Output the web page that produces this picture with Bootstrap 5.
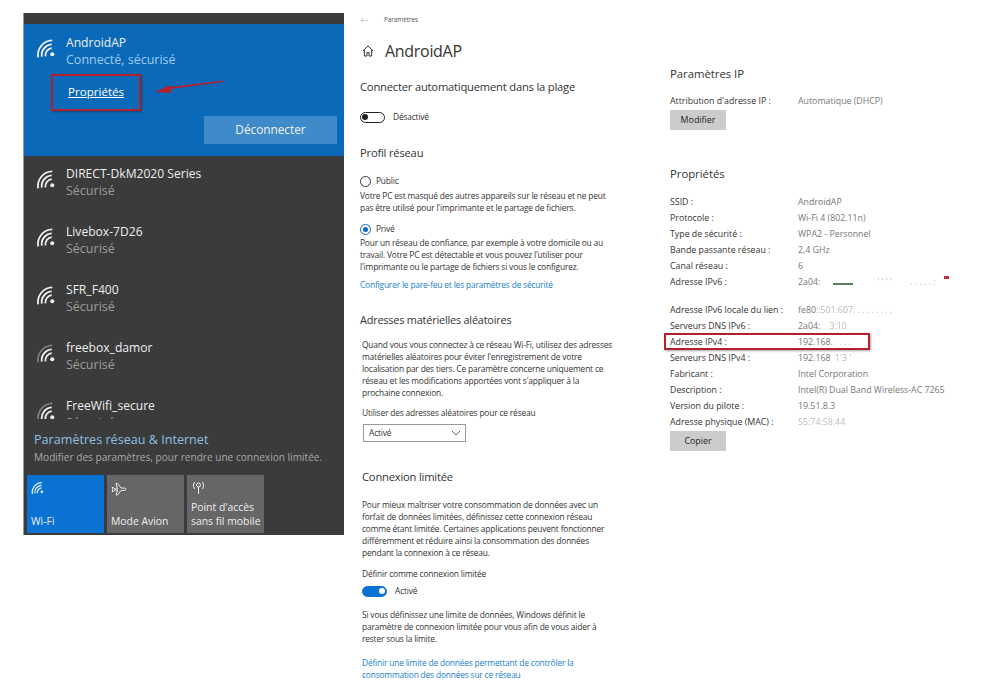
<!DOCTYPE html>
<html lang="fr"><head><meta charset="utf-8"><title>AndroidAP</title>
<link href="https://cdn.jsdelivr.net/npm/bootstrap@5.3.0/dist/css/bootstrap.min.css" rel="stylesheet">
<style>
html,body{height:693px;overflow:hidden;background:#fff}
body{font-family:"Open Sans","Noto Sans",sans-serif;color:#333;position:relative}
.stage{padding:13px 0 0 23px}
.flyout{width:321px;height:522px;background:#3b3b3b;color:#eee;padding-top:11px;flex:none;border-left:1px solid #999}
.activenet{height:132px;background:#0a69b8;padding:10px 0 0 12px;position:relative}
.netrow{height:58px;padding:9px 0 0 12px}
.netrow.clip{height:31px;overflow:hidden}
.netline{gap:9px}
.netline svg{flex:none;margin-top:4px}
.nname{font-size:12.1px;line-height:17px;white-space:nowrap}
.nsub{font-size:12.5px;line-height:17px;color:#9c9c9c}
.activenet .nsub{color:#9fcdf0}
.proplink{font-size:11.6px;color:#fff;text-decoration:underline;display:block;margin:15px 0 0 32px;line-height:17px}
.discobtn{position:absolute;right:7px;bottom:12px;width:133px;height:28px;background:#3f8ac8;color:#f2f2f2;font-size:11.8px;border:0;border-radius:0;padding:0}
.netfoot{padding:11px 0 0 10px}
.nettitle{font-size:12.6px;line-height:19px;color:#8cc0e6}
.netdesc{font-size:10.1px;line-height:17px;color:#a8a8a8;white-space:nowrap}
.tiles{gap:3px;margin:9px 0 0 3px}
.tile{width:77px;height:58px;background:#666;color:#eee;font-size:10.4px;line-height:14px;padding:6px 3px 5px 4px;white-space:nowrap}
.tile.on{background:#0a72d2}
.midcol{width:270px;margin-left:16px;flex:none;padding-top:1px;font-size:8.4px;letter-spacing:-.17px;line-height:12px;color:#333}
.crumb{font-size:6.3px;line-height:12px;color:#555;gap:16px;height:12px;letter-spacing:0}
.pagehead{font-size:16px;letter-spacing:-.3px;line-height:24px;color:#333;margin-top:13px;gap:11px;height:24px;padding-left:2px}
.h-sec{font-size:11.3px;line-height:16px;color:#333;font-weight:400;margin:0;white-space:nowrap}
.midcol .h-sec{font-size:11.2px;letter-spacing:-.2px}
.midcol .h-left{margin-left:-2px;font-size:10.9px}
.gap-a{margin-top:16px}.gap-b{margin-top:14px}.gap-c{margin-top:22px}.gap-d{margin-top:3px}.gap-e{margin-top:9px}.gap-f{margin-top:2px}.gap-g{margin-top:6px}.gap-h{margin-top:21px}.gap-i{margin-top:11px}.gap-j{margin-top:8px}.gap-k{margin-top:5px}.gap-l{margin-top:27px}.gap-m{margin-top:12px}.gap-n{margin-top:16px}.gap-o{margin-top:14px}
.lowerpart{padding-left:2px}
.ctl{height:12px}
.radrow{gap:5px}
.tline{white-space:nowrap}
.tog{width:25px;height:11px;border:1.5px solid #222;border-radius:6px;padding:1px;display:inline-flex;align-items:center}
.tog i{width:6px;height:6px;border-radius:50%;background:#222}
.tog.on{background:#0a72d2;border-color:#0a72d2;justify-content:flex-end}
.tog.on i{background:#fff}
.radioish{width:11px;height:11px;border:1px solid #333;border-radius:50%;display:inline-flex;align-items:center;justify-content:center}
.radioish.on{border-color:#0a69c8;border-width:1.5px}
.radioish.on i{width:5px;height:5px;border-radius:50%;background:#0a69c8}
.bluelink{color:#1a7fc9;text-decoration:none;white-space:nowrap}
.selbox{width:103px;height:18px;border:1.5px solid #999;padding:0 0 0 5px;margin-left:1px;color:#333}
.rightcol{width:300px;margin-left:40px;flex:none;padding-top:53px;font-size:8.8px;color:#333}
.rrow{height:16px;line-height:16px;white-space:nowrap}
.rrow.spacer{height:12px}
.rlab{width:128px;flex:none}
.rval{color:#777}
.graybtn{width:56px;height:20px;background:#ccc;color:#222;font-size:8.9px;border:0;border-radius:0;padding:0;line-height:20px;margin-top:1px}
.propshead{margin-top:36px}
.proplist{margin-top:12px}
.faint{color:#bbb;filter:blur(.5px)}
.redbox{position:absolute;border:2px solid #b3202c;box-shadow:1px 1px 2px rgba(0,0,0,.35)}
.rb1{left:51px;top:74px;width:90px;height:37px}
.rb2{left:664px;top:333px;width:206px;height:17px}
.arrowover{position:absolute;left:150px;top:76px}
.inkdash{position:absolute;height:2px;filter:blur(.6px)}
.ink1{left:833px;top:283px;width:20px;background:#5d7f5a}
.ink2{left:944px;top:276px;width:5px;height:3px;background:#c8303c}
</style></head>
<body>
<div class="stage d-flex align-items-start">
  <div class="flyout">
    <div class="activenet">
      <div class="d-flex netline">
        <svg width="21" height="21" viewBox="0 0 20 20" fill="none" stroke="#f2f2f2" stroke-width="1.7"><use href="#wf"/></svg>
        <div><div class="nname">AndroidAP</div><div class="nsub">Connecté, sécurisé</div></div>
      </div>
      <a class="proplink" href="#">Propriétés</a>
      <button class="btn discobtn">Déconnecter</button>
    </div>
    <div class="netrow"><div class="d-flex netline"><svg width="21" height="21" viewBox="0 0 20 20" fill="none" stroke="#f2f2f2" stroke-width="1.7"><use href="#wf"/></svg><div><div class="nname">DIRECT-DkM2020 Series</div><div class="nsub">Sécurisé</div></div></div></div>
    <div class="netrow"><div class="d-flex netline"><svg width="21" height="21" viewBox="0 0 20 20" fill="none" stroke="#f2f2f2" stroke-width="1.7"><use href="#wf"/></svg><div><div class="nname">Livebox-7D26</div><div class="nsub">Sécurisé</div></div></div></div>
    <div class="netrow"><div class="d-flex netline"><svg width="21" height="21" viewBox="0 0 20 20" fill="none" stroke="#f2f2f2" stroke-width="1.7"><use href="#wf"/></svg><div><div class="nname">SFR_F400</div><div class="nsub">Sécurisé</div></div></div></div>
    <div class="netrow"><div class="d-flex netline"><svg width="21" height="21" viewBox="0 0 20 20" fill="none" stroke="#f2f2f2" stroke-width="1.7"><use href="#wf2"/></svg><div><div class="nname">freebox_damor</div><div class="nsub">Sécurisé</div></div></div></div>
    <div class="netrow clip"><div class="d-flex netline"><svg width="21" height="21" viewBox="0 0 20 20" fill="none" stroke="#f2f2f2" stroke-width="1.7"><use href="#wf2"/></svg><div><div class="nname">FreeWifi_secure</div><div class="nsub">Sécurisé</div></div></div></div>
    <div class="netfoot">
      <div class="nettitle">Paramètres réseau &amp; Internet</div>
      <div class="netdesc">Modifier des paramètres, pour rendre une connexion limitée.</div>
    </div>
    <div class="d-flex tiles">
      <div class="tile on d-flex flex-column justify-content-between"><svg width="14" height="14" viewBox="0 0 20 20" fill="none" stroke="#e8f2fb" stroke-width="1.8"><use href="#wf"/></svg><div>Wi-Fi</div></div>
      <div class="tile d-flex flex-column justify-content-between"><svg width="16" height="16" viewBox="0 0 16 16" fill="none" stroke="#eee" stroke-width="1"><path d="M1 6.500h1.500L4 8h2.500L5 2.500h1.500L10 7h3.500a1.200 1.200 0 0 1 0 2.400H10L6.500 14H5l1.500-5H4l-1.500 1.500H1L2 8.200z"/></svg><div>Mode Avion</div></div>
      <div class="tile d-flex flex-column justify-content-between"><svg width="15" height="14" viewBox="0 0 15 14" fill="none" stroke="#eee" stroke-width="1"><path d="M7.500 6v7M7.500 2a2 2 0 0 1 2 2 2 2 0 0 1-2 2 2 2 0 0 1-2-2 2 2 0 0 1 2-2M3.500 1Q1 4 3.500 8M11.500 1q2.500 3 0 7"/></svg><div>Point d'accès<br>sans fil mobile</div></div>
    </div>
  </div>

  <div class="midcol">
    <div class="crumb d-flex align-items-center">
      <svg width="8" height="7" viewBox="0 0 8 7" fill="none" stroke="#c4c4c4" stroke-width=".8"><path d="M8 3.500H1M3.500 1 1 3.500 3.500 6"/></svg>
      <span>Paramètres</span>
    </div>
    <div class="pagehead d-flex align-items-center">
      <svg width="12" height="12" viewBox="0 0 12 12" fill="none" stroke="#333" stroke-width="1"><path d="M.8 6 6 1l5.200 5M2.300 5v6h2.700V7.500h2V11h2.700V5"/></svg>
      <span>AndroidAP</span>
    </div>
    <h2 class="h-sec gap-a">Connecter automatiquement dans la plage</h2>
    <div class="d-flex align-items-center gap-2 ctl gap-n"><span class="tog"><i></i></span><span>Désactivé</span></div>
    <h2 class="h-sec gap-c">Profil réseau</h2>
    <div class="d-flex align-items-center radrow ctl gap-b"><span class="radioish"></span><span>Public</span></div>
    <div class="tline gap-d">Votre PC est masqué des autres appareils sur le réseau et ne peut<br>pas être utilisé pour l'imprimante et le partage de fichiers.</div>
    <div class="d-flex align-items-center radrow ctl gap-e"><span class="radioish on"><i></i></span><span>Privé</span></div>
    <div class="tline gap-f">Pour un réseau de confiance, par exemple à votre domicile ou au<br>travail. Votre PC est détectable et vous pouvez l'utiliser pour<br>l'imprimante ou le partage de fichiers si vous le configurez.</div>
    <div class="gap-g"><a class="bluelink" href="#">Configurer le pare-feu et les paramètres de sécurité</a></div>
    <div class="lowerpart">
    <h2 class="h-sec h-left gap-h">Adresses matérielles aléatoires</h2>
    <div class="tline gap-i">Quand vous vous connectez à ce réseau Wi-Fi, utilisez des adresses<br>matérielles aléatoires pour éviter l'enregistrement de votre<br>localisation par des tiers. Ce paramètre concerne uniquement ce<br>réseau et les modifications apportées vont s'appliquer à la<br>prochaine connexion.</div>
    <div class="gap-j">Utiliser des adresses aléatoires pour ce réseau</div>
    <div class="selbox d-flex align-items-center justify-content-between gap-k">Activé<svg class="me-1" width="10" height="6" viewBox="0 0 10 6" fill="none" stroke="#555" stroke-width=".9"><path d="M1 1l4 4 4-4"/></svg></div>
    <h2 class="h-sec gap-l">Connexion limitée</h2>
    <div class="tline gap-o">Pour mieux maîtriser votre consommation de données avec un<br>forfait de données limitées, définissez cette connexion réseau<br>comme étant limitée. Certaines applications peuvent fonctionner<br>différemment et réduire ainsi la consommation des données<br>pendant la connexion à ce réseau.</div>
    <div class="gap-e">Définir comme connexion limitée</div>
    <div class="d-flex align-items-center gap-2 ctl gap-k"><span class="tog on"><i></i></span><span>Activé</span></div>
    <div class="tline gap-m">Si vous définissez une limite de données, Windows définit le<br>paramètre de connexion limitée pour vous afin de vous aider à<br>rester sous la limite.</div>
    <div class="gap-m"><a class="bluelink" href="#">Définir une limite de données permettant de contrôler la<br>consommation des données sur ce réseau</a></div>
    </div>
  </div>

  <div class="rightcol">
    <h2 class="h-sec">Paramètres IP</h2>
    <div class="d-flex rrow gap-i"><span class="rlab">Attribution d'adresse IP :</span><span class="rval">Automatique (DHCP)</span></div>
    <button class="btn graybtn d-block">Modifier</button>
    <h2 class="h-sec propshead">Propriétés</h2>
    <div class="proplist">
      <div class="d-flex rrow"><span class="rlab">SSID :</span><span class="rval">AndroidAP</span></div>
      <div class="d-flex rrow"><span class="rlab">Protocole :</span><span class="rval">Wi-Fi 4 (802.11n)</span></div>
      <div class="d-flex rrow"><span class="rlab">Type de sécurité :</span><span class="rval">WPA2 - Personnel</span></div>
      <div class="d-flex rrow"><span class="rlab">Bande passante réseau :</span><span class="rval">2,4 GHz</span></div>
      <div class="d-flex rrow"><span class="rlab">Canal réseau :</span><span class="rval">6</span></div>
      <div class="d-flex rrow"><span class="rlab">Adresse IPv6 :</span><span class="rval">2a04:<span class="faint"> &nbsp; &nbsp; &nbsp; &nbsp; &nbsp; &nbsp; &nbsp; &nbsp; &nbsp; &nbsp; &nbsp; &nbsp; ' ' ' ' &nbsp; &nbsp; &nbsp; &nbsp;. . . . . :</span></span></div>
      <div class="d-flex rrow spacer"></div>
      <div class="d-flex rrow"><span class="rlab">Adresse IPv6 locale du lien :</span><span class="rval">fe80<span class="faint">::501:607: . . . . . . . .</span></span></div>
      <div class="d-flex rrow"><span class="rlab">Serveurs DNS IPv6 :</span><span class="rval">2a04:<span class="faint"> &nbsp; &nbsp;3:10</span></span></div>
      <div class="d-flex rrow"><span class="rlab">Adresse IPv4 :</span><span class="rval">192.168.<span class="faint"> &nbsp; . . .</span></span></div>
      <div class="d-flex rrow"><span class="rlab">Serveurs DNS IPv4 :</span><span class="rval">192.168<span class="faint"> &nbsp;1'3 '</span></span></div>
      <div class="d-flex rrow"><span class="rlab">Fabricant :</span><span class="rval">Intel Corporation</span></div>
      <div class="d-flex rrow"><span class="rlab">Description :</span><span class="rval">Intel(R) Dual Band Wireless-AC 7265</span></div>
      <div class="d-flex rrow"><span class="rlab">Version du pilote :</span><span class="rval">19.51.8.3</span></div>
      <div class="d-flex rrow"><span class="rlab">Adresse physique (MAC) :</span><span class="rval faint">55:74:58:44</span></div>
    </div>
    <button class="btn graybtn d-block">Copier</button>
  </div>
</div>

<div class="redbox rb1"></div>
<div class="redbox rb2"></div>
<svg class="arrowover" width="76" height="20" viewBox="0 0 76 20"><path d="M73 4.500 73 6 21 13 21 17 5 16 20 9 20 11z" fill="#b3202c"/></svg>
<span class="inkdash ink1"></span>
<span class="inkdash ink2"></span>

<svg width="0" height="0" class="position-absolute">
  <defs>
    <g id="wf"><circle cx="15.500" cy="15.500" r="1.900" fill="#f2f2f2" stroke="none"/><path d="M9 17.500A6.800 6.800 0 0 1 15 9.700"/><path d="M5.500 17.800A10.300 10.300 0 0 1 15 6.100"/><path d="M2 18.500A14 14 0 0 1 15.500 2.300"/></g>
    <g id="wf2"><circle cx="15.500" cy="15.500" r="1.900" fill="#f2f2f2" stroke="none"/><path d="M9 17.500A6.800 6.800 0 0 1 15 9.700"/><path d="M5.500 17.800A10.300 10.300 0 0 1 15 6.100"/><path d="M2 18.500A14 14 0 0 1 15.500 2.300" stroke="#7d7d7d"/></g>
  </defs>
</svg>
<script src="https://cdn.jsdelivr.net/npm/bootstrap@5.3.0/dist/js/bootstrap.bundle.min.js"></script>
</body></html>
